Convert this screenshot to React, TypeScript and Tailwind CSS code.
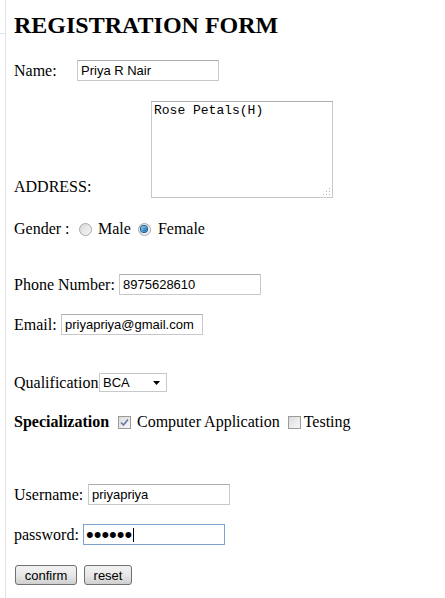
import React from "react";

const serif = "font-['Liberation_Serif','Times_New_Roman',serif]";
const sans = "font-['Liberation_Sans',Arial,sans-serif]";
const inputCls = `h-[21px] w-[142px] border border-[#c6c8cc] border-t-[#abadb3] bg-white px-[3px] text-[13px] text-black ${sans} outline-none`;

function Radio({ checked }: { checked?: boolean }) {
  return (
    <span className="flex h-[13px] w-[13px] items-center justify-center rounded-full border border-[#a8a8a8] bg-gradient-to-br from-[#d8d8d8] to-[#f8f8f8]">
      {checked && (
        <span className="h-[6px] w-[6px] rounded-full bg-gradient-to-br from-[#8ad1f5] to-[#0c62a8] ring-1 ring-[#1a5a90]" />
      )}
    </span>
  );
}

function Checkbox({ checked }: { checked?: boolean }) {
  return (
    <span className="flex h-[13px] w-[13px] items-center justify-center border border-[#9a9b9b] bg-gradient-to-br from-[#dcdcdc] to-[#f7f7f7]">
      {checked && (
        <svg width="9" height="9" viewBox="0 0 9 9">
          <path d="M1 4.5 L3.5 7 L8 1.5" fill="none" stroke="#5a6fa7" strokeWidth="1.5" />
        </svg>
      )}
    </span>
  );
}

function Button({ label, w }: { label: string; w: string }) {
  return (
    <button
      className={`h-[20px] ${w} rounded-[3px] border border-[#707070] bg-gradient-to-b from-[#f2f2f2] via-[#e8e8e8] to-[#cfcfcf] text-[13px] leading-none text-black ${sans}`}
    >
      {label}
    </button>
  );
}

export default function App() {
  return (
    <div className={`flex min-h-[598px] w-[445px] bg-white text-[16px] text-black ${serif}`}>
      {/* page frame */}
      <div className="w-[5px]">
        <div className="mt-[33px] h-px bg-[#e3e3e3]" />
      </div>
      <div className="flex-1 border-l border-[#e3e3e3] pl-[8px]">
        <h2 className="pt-[11px] text-[24px] font-bold leading-[28px]">REGISTRATION FORM</h2>

        {/* Name */}
        <div className="mt-[21px] flex h-[21px] items-center">
          <span className="w-[63px]">Name:</span>
          <input className={inputCls} defaultValue="Priya R Nair" />
        </div>

        {/* Address */}
        <div className="mt-[20px] flex items-end">
          <span className="mb-[-1px] w-[137px]">ADDRESS:</span>
          <div className="relative">
            <textarea
              className="block h-[97px] w-[182px] resize-none border border-[#c6c8cc] border-t-[#abadb3] px-[2px] py-[1px] font-['Liberation_Mono','Courier_New',monospace] text-[13px] leading-[15px] outline-none"
              defaultValue="Rose Petals(H)"
            />
            <svg className="absolute bottom-[2px] right-[2px]" width="8" height="8" viewBox="0 0 8 8">
              <rect x="6" y="0" width="1" height="1" fill="#b0b0b0" />
              <rect x="3" y="3" width="1" height="1" fill="#b0b0b0" />
              <rect x="6" y="3" width="1" height="1" fill="#b0b0b0" />
              <rect x="0" y="6" width="1" height="1" fill="#b0b0b0" />
              <rect x="3" y="6" width="1" height="1" fill="#b0b0b0" />
              <rect x="6" y="6" width="1" height="1" fill="#b0b0b0" />
            </svg>
          </div>
        </div>

        {/* Gender */}
        <div className="mt-[22px] flex h-[18px] items-center">
          <span className="w-[65px]">Gender :</span>
          <Radio />
          <span className="ml-[6px]">Male</span>
          <span className="ml-[7px]">
            <Radio checked />
          </span>
          <span className="ml-[7px]">Female</span>
        </div>

        {/* Phone */}
        <div className="mt-[36px] flex h-[21px] items-center">
          <span className="w-[105px]">Phone Number:</span>
          <input className={inputCls} defaultValue="8975628610" />
        </div>

        {/* Email */}
        <div className="mt-[19px] flex h-[21px] items-center">
          <span className="w-[47px]">Email:</span>
          <input className={inputCls} defaultValue="priyapriya@gmail.com" />
        </div>

        {/* Qualification */}
        <div className="mt-[38px] flex h-[19px] items-center">
          <span className="w-[85px]">Qualification</span>
          <div className={`flex h-[19px] w-[68px] items-center justify-between border border-[#c6c8cc] bg-white pl-[3px] pr-[6px] text-[13px] ${sans}`}>
            <span>BCA</span>
            <svg width="7" height="4" viewBox="0 0 7 4">
              <path d="M0 0 H7 L3.5 4 Z" fill="#000" />
            </svg>
          </div>
        </div>

        {/* Specialization */}
        <div className="mt-[21px] flex h-[18px] items-center">
          <span className="w-[104px] font-bold">Specialization</span>
          <Checkbox checked />
          <span className="ml-[6px]">Computer Application</span>
          <span className="ml-[8px]">
            <Checkbox />
          </span>
          <span className="ml-[3px]">Testing</span>
        </div>

        {/* Username */}
        <div className="mt-[53px] flex h-[21px] items-center">
          <span className="w-[74px]">Username:</span>
          <input className={inputCls} defaultValue="priyapriya" />
        </div>

        {/* Password */}
        <div className="mt-[19px] flex h-[21px] items-center">
          <span className="w-[69px]">password:</span>
          <div className={`flex h-[21px] w-[142px] items-center border border-[#7da2ce] bg-white pl-[2px] ${sans}`}>
            <span className="text-[22px] leading-none">••••••</span>
            <span className="ml-px h-[14px] w-px bg-black" />
          </div>
        </div>

        {/* Buttons */}
        <div className="mt-[20px] flex gap-[7px] pl-px">
          <Button label="confirm" w="w-[62px]" />
          <Button label="reset" w="w-[48px]" />
        </div>
      </div>
    </div>
  );
}
